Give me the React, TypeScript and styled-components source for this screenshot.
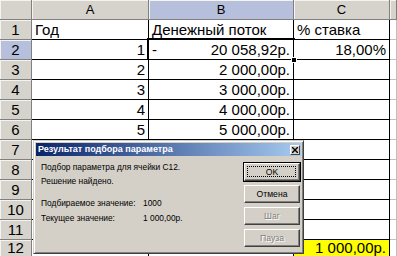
import React from "react";
import styled, { createGlobalStyle, css } from "styled-components";

const GlobalStyle = createGlobalStyle`
  html, body {
    margin: 0;
    padding: 0;
    background: #ffffff;
    overflow: hidden;
  }
  body {
    font-family: "Liberation Sans", Arial, sans-serif;
  }
`;

type Align = "left" | "right" | "center";

interface CellData {
  text?: string;
  align?: Align;
  minus?: boolean;
  fill?: string;
  selected?: boolean;
}

interface RowData {
  n: number;
  a?: CellData;
  b?: CellData;
  c?: CellData;
  raised?: boolean;
}

const rows: RowData[] = [
  { n: 1, a: { text: "Год" }, b: { text: "Денежный поток" }, c: { text: "% ставка" } },
  {
    n: 2,
    a: { text: "1", align: "right" },
    b: { text: "20 058,92р.", align: "right", minus: true, selected: true },
    c: { text: "18,00%", align: "right" }
  },
  { n: 3, a: { text: "2", align: "right" }, b: { text: "2 000,00р.", align: "right" } },
  { n: 4, a: { text: "3", align: "right" }, b: { text: "3 000,00р.", align: "right" } },
  { n: 5, a: { text: "4", align: "right" }, b: { text: "4 000,00р.", align: "right" } },
  { n: 6, a: { text: "5", align: "right" }, b: { text: "5 000,00р.", align: "right" } },
  { n: 7 },
  { n: 8 },
  { n: 9 },
  { n: 10 },
  { n: 11 },
  { n: 12, raised: true, c: { text: "1 000,00р.", align: "right", fill: "#ffff00" } }
];

const styles = {
  Screen: styled.div`
    position: relative;
    width: 397px;
    height: 256px;
    overflow: hidden;
  `,
  Sheet: styled.div`
    display: grid;
    grid-template-columns: 32px 117px 145px 96px 1fr;
    grid-auto-rows: 20px;
    width: 397px;
  `,
  Head: styled.div<{ $selected?: boolean; $small?: boolean; $raised?: boolean }>`
    box-sizing: border-box;
    background: ${p => (p.$selected ? "#b6bfdc" : "#d6d3cc")};
    border-right: 1px solid #808080;
    border-bottom: 1px solid #808080;
    box-shadow: inset 1px 1px 0 #f4f3ef;
    color: #000000;
    text-align: center;
    font-size: ${p => (p.$small ? "13px" : "15px")};
    line-height: ${p => (p.$raised ? "15px" : "18px")};
    padding-top: ${p => (p.$raised ? "0" : "1px")};
    white-space: nowrap;
    overflow: hidden;
  `,
  Cell: styled.div<{
    $align?: Align;
    $fill?: string;
    $light?: boolean;
    $selected?: boolean;
    $raised?: boolean;
  }>`
    position: relative;
    box-sizing: border-box;
    display: flex;
    justify-content: ${p =>
      p.$align === "right" ? "flex-end" : p.$align === "center" ? "center" : "flex-start"};
    background: ${p => p.$fill || "#ffffff"};
    border-right: 1px solid ${p => (p.$light ? "#c0c0c0" : "#000000")};
    border-bottom: 1px solid ${p => (p.$light ? "#c0c0c0" : "#000000")};
    padding: ${p => (p.$raised ? "0" : "1px")} 3px 0 3px;
    font-size: 15px;
    line-height: ${p => (p.$raised ? "15px" : "18px")};
    color: #000000;
    white-space: nowrap;
    ${p =>
      p.$selected &&
      css`
        &::after {
          content: "";
          position: absolute;
          left: -2px;
          top: -2px;
          right: -2px;
          bottom: -2px;
          border: 2px solid #000000;
          pointer-events: none;
        }
        &::before {
          content: "";
          position: absolute;
          right: -4px;
          bottom: -4px;
          width: 4px;
          height: 4px;
          background: #000000;
          border: 1px solid #ffffff;
          z-index: 1;
        }
      `}
  `,
  Minus: styled.span`
    flex: 1;
  `,
  Dialog: styled.div`
    position: absolute;
    left: 33px;
    top: 140px;
    width: 271px;
    height: 114px;
    box-sizing: border-box;
    display: flex;
    flex-direction: column;
    background: #d4d0c8;
    border: 1px solid;
    border-color: #d4d0c8 #404040 #404040 #d4d0c8;
    box-shadow: inset 1px 1px 0 #ffffff, inset -1px -1px 0 #808080;
    padding: 2px;
    font-size: 8.4px;
    color: #000000;
  `,
  TitleBar: styled.div`
    display: flex;
    align-items: center;
    height: 13px;
    padding-left: 2px;
    background: linear-gradient(to right, #0a246a, #a6caf0);
  `,
  Title: styled.div`
    flex: 1;
    color: #ffffff;
    font-weight: bold;
    font-size: 9px;
    line-height: 13px;
    white-space: nowrap;
  `,
  CloseButton: styled.div`
    box-sizing: border-box;
    display: flex;
    align-items: center;
    justify-content: center;
    width: 10px;
    height: 10px;
    margin-right: 1px;
    background: #d4d0c8;
    border: 1px solid;
    border-color: #ffffff #404040 #404040 #ffffff;
  `,
  Body: styled.div`
    flex: 1;
    display: flex;
    gap: 6px;
    padding: 0 1px 0 5px;
  `,
  Info: styled.div`
    flex: 1;
    padding-top: 4px;
  `,
  Line: styled.div`
    line-height: 14px;
    white-space: nowrap;
  `,
  Values: styled.div`
    display: grid;
    grid-template-columns: 102px auto;
    grid-auto-rows: 15px;
    align-items: center;
    margin-top: 7px;
    white-space: nowrap;
  `,
  Buttons: styled.div`
    display: flex;
    flex-direction: column;
    gap: 4px;
    padding-top: 7px;
    width: 56px;
  `,
  Button: styled.div<{ $default?: boolean; $disabled?: boolean }>`
    position: relative;
    box-sizing: border-box;
    height: 18px;
    display: flex;
    align-items: center;
    justify-content: center;
    background: #d4d0c8;
    border: 1px solid;
    border-color: #ffffff #404040 #404040 #ffffff;
    box-shadow: inset -1px -1px 0 #808080;
    font-size: 8.6px;
    color: ${p => (p.$disabled ? "#808080" : "#000000")};
    text-shadow: ${p => (p.$disabled ? "1px 1px 0 #ffffff" : "none")};
    ${p =>
      p.$default &&
      css`
        outline: 1px solid #000000;
        &::after {
          content: "";
          position: absolute;
          left: 2px;
          top: 2px;
          right: 3px;
          bottom: 3px;
          border: 1px dotted #000000;
        }
      `}
  `
};

const CloseIcon = () => (
  <svg width="6" height="6" viewBox="0 0 6 6">
    <path d="M0 0 L6 6 M6 0 L0 6" stroke="#000000" strokeWidth="1.4" />
  </svg>
);

const DataCell = ({ cell, light, raised }: { cell?: CellData; light?: boolean; raised?: boolean }) => (
  <styles.Cell
    $align={cell?.align}
    $fill={cell?.fill}
    $light={light}
    $selected={cell?.selected}
    $raised={raised}
  >
    {cell?.minus && <styles.Minus>-</styles.Minus>}
    {cell?.text}
  </styles.Cell>
);

const GoalSeekDialog = () => (
  <styles.Dialog>
    <styles.TitleBar>
      <styles.Title>Результат подбора параметра</styles.Title>
      <styles.CloseButton>
        <CloseIcon />
      </styles.CloseButton>
    </styles.TitleBar>
    <styles.Body>
      <styles.Info>
        <styles.Line>Подбор параметра для ячейки C12.</styles.Line>
        <styles.Line>Решение найдено.</styles.Line>
        <styles.Values>
          <span>Подбираемое значение:</span>
          <span>1000</span>
          <span>Текущее значение:</span>
          <span>1 000,00р.</span>
        </styles.Values>
      </styles.Info>
      <styles.Buttons>
        <styles.Button $default>OK</styles.Button>
        <styles.Button>Отмена</styles.Button>
        <styles.Button $disabled>Шаг</styles.Button>
        <styles.Button $disabled>Пауза</styles.Button>
      </styles.Buttons>
    </styles.Body>
  </styles.Dialog>
);

export default function App() {
  return (
    <styles.Screen>
      <GlobalStyle />
      <styles.Sheet>
        <styles.Head />
        <styles.Head $small>A</styles.Head>
        <styles.Head $small $selected>B</styles.Head>
        <styles.Head $small>C</styles.Head>
        <styles.Head $small />
        {rows.map(row => (
          <React.Fragment key={row.n}>
            <styles.Head $selected={row.n === 2} $raised={row.raised}>
              {row.n}
            </styles.Head>
            <DataCell cell={row.a} raised={row.raised} />
            <DataCell cell={row.b} raised={row.raised} />
            <DataCell cell={row.c} raised={row.raised} />
            <DataCell light raised={row.raised} />
          </React.Fragment>
        ))}
      </styles.Sheet>
      <GoalSeekDialog />
    </styles.Screen>
  );
}
